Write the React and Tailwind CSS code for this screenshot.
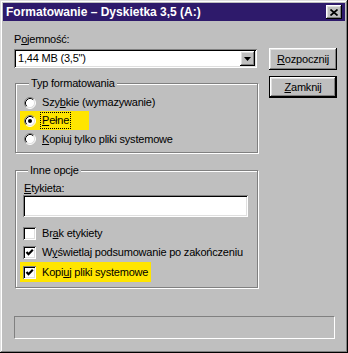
import React from "react";

const raised = "shadow-[inset_-1px_-1px_#000,inset_1px_1px_#fff,inset_-2px_-2px_#808080,inset_2px_2px_#dfdfdf]";
const sunken = "shadow-[inset_1px_1px_#808080,inset_-1px_-1px_#fff,inset_2px_2px_#000,inset_-2px_-2px_#dfdfdf]";

function Radio({ checked }) {
  return (
    <svg width="12" height="12" viewBox="0 0 12 12" className="shrink-0">
      <circle cx="6" cy="6" r="5" fill="#fff" />
      <path d="M2.11 9.89 A5.5 5.5 0 0 1 9.89 2.11" stroke="#808080" fill="none" />
      <path d="M9.89 2.11 A5.5 5.5 0 0 1 2.11 9.89" stroke="#fff" fill="none" />
      <path d="M2.82 9.18 A4.5 4.5 0 0 1 9.18 2.82" stroke="#000" fill="none" />
      <path d="M9.18 2.82 A4.5 4.5 0 0 1 2.82 9.18" stroke="#dfdfdf" fill="none" />
      {checked && <circle cx="6" cy="6" r="2" fill="#000" />}
    </svg>
  );
}

function Check({ checked }) {
  return (
    <div className={"w-[13px] h-[13px] shrink-0 bg-white flex items-center justify-center " + sunken}>
      {checked && (
        <svg width="9" height="9" viewBox="0 0 9 9">
          <path d="M1.5 4 L3.5 6.2 L7.8 1.8" stroke="#000" strokeWidth="2.2" fill="none" />
        </svg>
      )}
    </div>
  );
}

function Btn({ children, isDefault }) {
  return (
    <div className={"h-[22px] w-[68px] flex items-center justify-center " + (isDefault ? "border border-black" : "")}>
      <div className={"w-full h-full flex items-center justify-center " + raised}>{children}</div>
    </div>
  );
}

export default function App() {
  return (
    <div className="w-[348px] h-[353px] bg-[#bfbfbf] p-[3px] text-[11px] tracking-[-0.2px] text-black whitespace-nowrap shadow-[inset_-1px_-1px_#000,inset_1px_1px_#dfdfdf,inset_-2px_-2px_#808080,inset_2px_2px_#fff]" style={{ fontFamily: '"Liberation Sans", Arial, sans-serif' }}>
      <div className="h-[18px] bg-[#2e1a6b] flex items-center justify-between pl-[3px] pr-[3px]">
        <span className="text-white font-bold text-[12px] leading-[14px] tracking-normal">Formatowanie – Dyskietka 3,5 (A:)</span>
        <div className={"w-[16px] h-[14px] bg-[#bfbfbf] flex items-center justify-center " + raised}>
          <svg width="8" height="7" viewBox="0 0 8 7">
            <path d="M0.5 0.5 L7.5 6.5 M7.5 0.5 L0.5 6.5" stroke="#000" strokeWidth="1.7" />
          </svg>
        </div>
      </div>

      <div className="flex flex-col pl-[11px]">
        <div className="flex">
          <div className="w-[244px] pt-[12px] flex flex-col">
            <div className="leading-[13px]">P<span className="underline">o</span>jemność:</div>
            <div className={"mt-[3px] h-[19px] w-[243px] bg-white flex items-center p-[2px] " + sunken}>
              <span className="flex-1 pl-[2px] leading-[13px]">1,44 MB (3,5")</span>
              <div className={"w-[15px] h-full bg-[#bfbfbf] flex items-center justify-center " + raised}>
                <svg width="7" height="4" viewBox="0 0 7 4"><path d="M0 0 H7 L3.5 4 Z" fill="#000" /></svg>
              </div>
            </div>

            <fieldset className="mt-[9px] ml-[1px] w-[243px] border border-[#808080] shadow-[inset_1px_1px_#fff,1px_1px_#fff] pl-[8px] pb-[4px]">
              <legend className="ml-[5px] px-[2px] leading-[13px] bg-[#bfbfbf]">Typ formatowania</legend>
              <div className="pt-[4px] flex flex-col">
                <div className="h-[17px] flex items-center gap-[6px]">
                  <Radio />
                  <span>Szy<span className="underline">b</span>kie (wymazywanie)</span>
                </div>
                <div className="h-[19px] w-[69px] -ml-[4px] pl-[4px] bg-[#ffe500] flex items-center gap-[6px]">
                  <Radio checked />
                  <span className="leading-[13px] outline-1 outline-dotted outline-black outline-offset-1"><span className="underline">P</span>ełne</span>
                </div>
                <div className="h-[18px] flex items-center gap-[6px]">
                  <Radio />
                  <span><span className="underline">K</span>opiuj tylko pliki systemowe</span>
                </div>
              </div>
            </fieldset>

            <fieldset className="mt-[11px] ml-[1px] w-[243px] border border-[#808080] shadow-[inset_1px_1px_#fff,1px_1px_#fff] pl-[7px] pb-[5px]">
              <legend className="ml-[5px] px-[2px] leading-[13px] bg-[#bfbfbf]">Inne opcje</legend>
              <div className="pt-[5px] flex flex-col">
                <div className="leading-[13px] pl-[1px]"><span className="underline">E</span>tykieta:</div>
                <div className={"h-[22px] w-[225px] bg-white " + sunken} />
                <div className="mt-[7px] h-[19px] flex items-center gap-[6px]">
                  <Check />
                  <span>Br<span className="underline">a</span>k etykiety</span>
                </div>
                <div className="h-[19px] flex items-center gap-[6px]">
                  <Check checked />
                  <span>W<span className="underline">y</span>świetlaj podsumowanie po zakończeniu</span>
                </div>
                <div className="h-[20px] w-[131px] -ml-[3px] pl-[3px] bg-[#ffe500] flex items-center gap-[6px]">
                  <Check checked />
                  <span>Kopi<span className="underline">u</span>j pliki systemowe</span>
                </div>
              </div>
            </fieldset>
          </div>

          <div className="ml-[11px] w-[68px] pt-[27px] flex flex-col gap-[6px]">
            <Btn><span><span className="underline">R</span>ozpocznij</span></Btn>
            <Btn isDefault><span><span className="underline">Z</span>amknij</span></Btn>
          </div>
        </div>

        <div className="mt-[28px] w-[321px] h-[23px] border border-[#808080] border-b-white border-r-white" />
      </div>
    </div>
  );
}
